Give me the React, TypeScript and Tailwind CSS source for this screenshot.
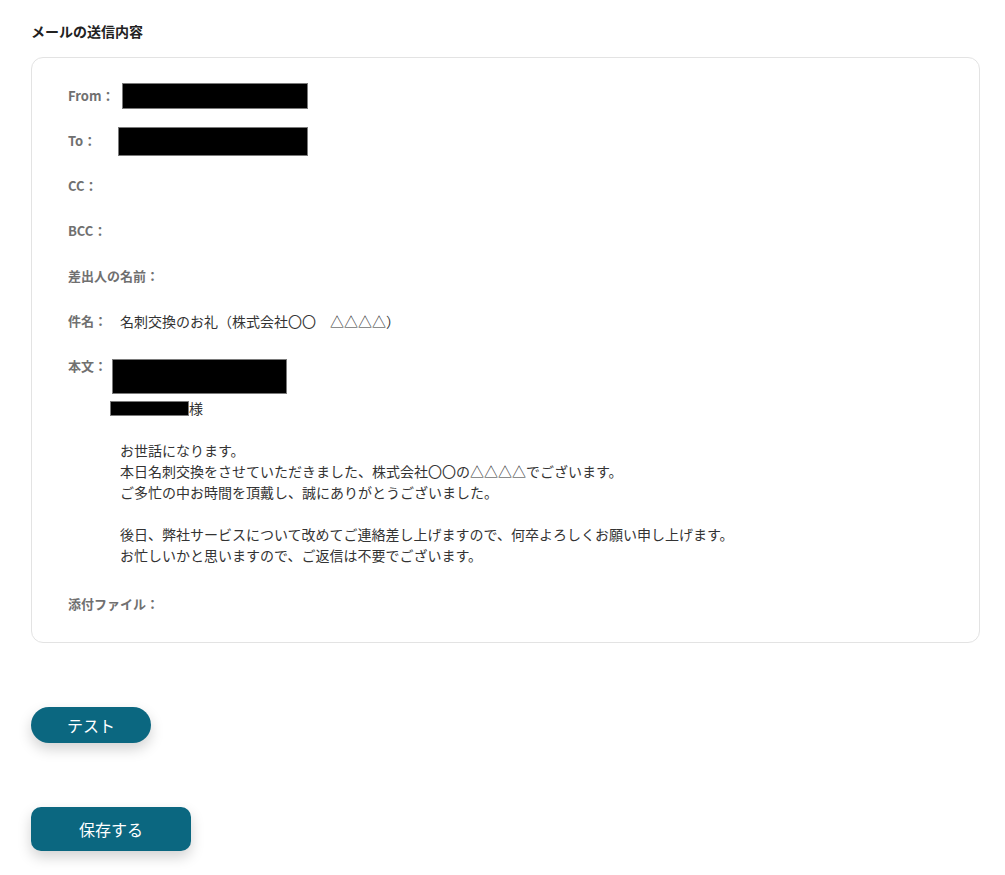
import React from "react";

const font = { fontFamily: '"Noto Sans CJK JP", "Noto Sans", sans-serif' };

function Label({ children }: { children: React.ReactNode }) {
  return <span className="text-[13px] font-bold text-[#707070] leading-[26px]">{children}</span>;
}

function Redacted({ className }: { className: string }) {
  return <div className={`bg-black border border-[#7a7a7a] ${className}`} />;
}

export default function App() {
  const body = [
    "お世話になります。",
    "本日名刺交換をさせていただきました、株式会社〇〇の△△△△でございます。",
    "ご多忙の中お時間を頂戴し、誠にありがとうございました。",
    "",
    "後日、弊社サービスについて改めてご連絡差し上げますので、何卒よろしくお願い申し上げます。",
    "お忙しいかと思いますので、ご返信は不要でございます。",
  ];

  return (
    <div style={font} className="min-h-screen bg-white pl-[31px] pr-[25px] pt-[21px] pb-10">
      <h2 className="text-[14px] font-bold text-[#222] leading-[20px] mb-[16px]">メールの送信内容</h2>

      <div className="border border-[#e3e3e3] rounded-[12px] pl-[36px] pt-[25px] pb-[25px]">
        <div className="flex flex-col gap-[19px]">
          <div className="flex items-center h-[26px]">
            <Label>From：</Label>
            <Redacted className="ml-[7px] w-[186px] h-[26px]" />
          </div>
          <div className="flex items-center h-[26px]">
            <Label>To：</Label>
            <Redacted className="ml-[22px] w-[190px] h-[29px]" />
          </div>
          <div className="flex items-center h-[26px]">
            <Label>CC：</Label>
          </div>
          <div className="flex items-center h-[26px]">
            <Label>BCC：</Label>
          </div>
          <div className="flex items-center h-[26px]">
            <Label>差出人の名前：</Label>
          </div>
          <div className="flex items-center h-[26px]">
            <Label>件名：</Label>
            <span className="ml-[13px] text-[14px] text-[#333]">名刺交換のお礼（株式会社〇〇　△△△△）</span>
          </div>
          <div>
            <div className="flex items-start">
              <Label>本文：</Label>
              <Redacted className="ml-[5px] mt-[6px] w-[175px] h-[35px]" />
            </div>
            <div className="ml-[42px] mt-[4px] flex items-center h-[21px]">
              <Redacted className="w-[79px] h-[15px]" />
              <span className="text-[14px] text-[#333] leading-[21px]">様</span>
            </div>
            <div className="ml-[52px] mt-[21px] text-[14px] text-[#333] leading-[21px]">
              {body.map((line, i) => (
                <div key={i} className="h-[21px]">{line}</div>
              ))}
            </div>
          </div>
          <div className="flex items-center h-[26px] mt-[6px]">
            <Label>添付ファイル：</Label>
          </div>
        </div>
      </div>

      <div className="mt-[64px]">
        <button className="w-[120px] h-[36px] rounded-full bg-[#0b6780] text-white text-[16px] shadow-[0_6px_14px_rgba(0,0,0,0.18)]">
          テスト
        </button>
      </div>
      <div className="mt-[64px]">
        <button className="w-[160px] h-[44px] rounded-[10px] bg-[#0b6780] text-white text-[16px] shadow-[0_6px_14px_rgba(0,0,0,0.18)]">
          保存する
        </button>
      </div>
    </div>
  );
}
